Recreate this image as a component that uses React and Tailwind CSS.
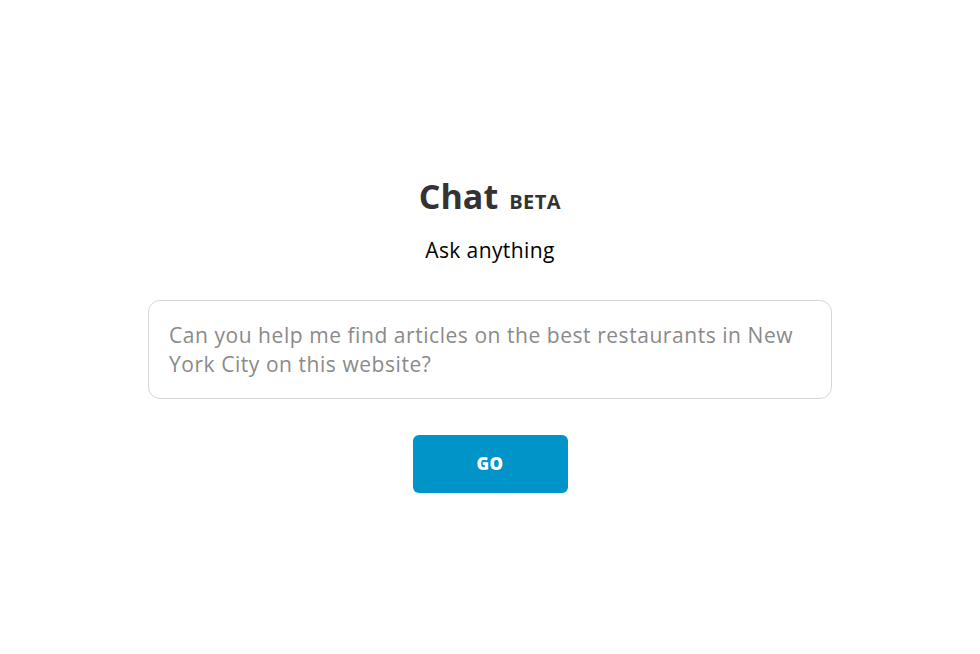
export default function App() {
  return (
    <div
      className="flex h-[654px] w-full flex-col items-center bg-white pt-[172px]"
      style={{ fontFamily: '"Open Sans", "Noto Sans", sans-serif' }}
    >
      <h1 className="flex items-baseline gap-[11px] text-[34px] font-bold leading-[48px] text-[#333333]">
        Chat <span className="text-[20px] font-bold tracking-wide">BETA</span>
      </h1>
      <p className="mt-[10px] text-[21px] leading-[28px] tracking-[0.4px] text-black">Ask anything</p>
      <div className="mt-[36px] h-[99px] w-[684px] rounded-xl border border-[#d6d6d6] px-5 py-[20px] text-[21px] leading-[29px] tracking-[0.55px] text-[#8a8a8a]">
        Can you help me find articles on the best restaurants in New
        <br />
        York City on this website?
      </div>
      <button className="mt-[36px] h-[58px] w-[155px] rounded-md bg-[#0094c8] text-[17px] font-extrabold tracking-wide text-white">
        GO
      </button>
    </div>
  );
}
